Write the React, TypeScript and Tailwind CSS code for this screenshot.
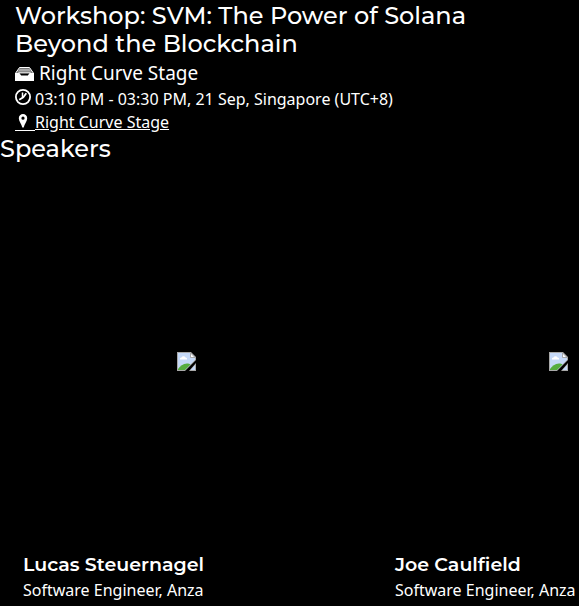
import React from "react";

const speakers = [
  { name: "Lucas Steuernagel", role: "Software Engineer, Anza" },
  { name: "Joe Caulfield", role: "Software Engineer, Anza" },
];

function InboxIcon() {
  return (
    <svg viewBox="0 0 19 14" className="mt-0.5 h-[14px] w-[19px] shrink-0" aria-hidden="true">
      <path d="M4.500 0.500h10L18.500 6H.5z" fill="#777" />
      <path d="M4.500 0.500h10" stroke="#fff" strokeWidth="1" />
      <path d="M4.500 0.500L.8 5.800M14.500.5l3.700 5.300" stroke="#fff" strokeWidth="1" />
      <path d="M4.500 2h10l1.500 2.500H3z" fill="#a8a8a8" />
      <path d="M3 5h13L13.500 8.500h-8z" fill="#d0d0d0" />
      <path d="M4.500 6.500h10L13 9H6z" fill="#000" />
      <path d="M0 6h4.200l2 2.500h6.600l2-2.500H19v8H0z" fill="#fff" />
    </svg>
  );
}

function ClockIcon() {
  return (
    <svg viewBox="0 0 16 16" className="-mt-1 size-4 shrink-0" aria-hidden="true" fill="none" stroke="#fff">
      <circle cx="8" cy="8" r="7.100" strokeWidth="1.800" />
      <path d="M11.300 4.200L8.300 8.300 4.200 10.800" strokeWidth="1.800" />
      <path d="M7.500 3.500v5" strokeWidth="1.500" />
    </svg>
  );
}

function PinIcon() {
  return (
    <svg viewBox="0 0 16 16" className="size-4 shrink-0" aria-hidden="true">
      <path
        d="M8 1a4.200 4.200 0 0 0-4.200 4.200C3.800 8.200 6.600 10.800 7.300 14.500h1.400C9.400 10.800 12.200 8.200 12.200 5.200A4.200 4.200 0 0 0 8 1zm0 2.600a1.600 1.600 0 1 1 0 3.200 1.600 1.600 0 0 1 0-3.200z"
        fill="#fff"
        fillRule="evenodd"
      />
    </svg>
  );
}

function MissingPhoto({ name }: { name: string }) {
  return (
    <svg viewBox="0 0 19 19" className="size-[19px]" role="img" aria-label={name}>
      <path d="M0 0h14l5 5v3L8 19H0z" fill="#a8a8a8" />
      <path d="M1 1h12.500L18 5.500V8L8 18H1z" fill="#c5d9f8" />
      <path d="M3 7.500a1.500 1.500 0 0 1 1.500-2 2.200 2.200 0 0 1 4 0 1.500 1.500 0 0 1 1.500 2z" fill="#fff" />
      <path d="M1 17c2-3 5-5.500 9-5.500 1.500 0 2.500.3 3.500 1L8 18H1z" fill="#56ad3f" />
      <path d="M13.500 1v4.500H18z" fill="#fff" stroke="#999" strokeWidth=".8" />
      <path d="M19 11v8h-7z" fill="#a8a8a8" />
      <path d="M18 13v5h-4.500z" fill="#c5d9f8" />
    </svg>
  );
}

export default function App() {
  return (
    <main className="min-h-screen overflow-hidden bg-black pt-0.5 font-['Noto_Sans',sans-serif] text-base text-white">
      <header className="px-[15px]">
        <h1 className="font-[Montserrat,Inter,sans-serif] text-2xl leading-7 font-medium">
          Workshop: SVM: The Power of Solana Beyond the Blockchain
        </h1>
        <p className="mt-px flex items-center gap-[5px] text-[19px] leading-7">
          <InboxIcon />
          Right Curve Stage
        </p>
        <p className="flex items-center gap-1 leading-6">
          <ClockIcon />
          03:10 PM - 03:30 PM, 21 Sep, Singapore (UTC+8)
        </p>
        <a href="#stage" className="flex w-fit leading-[22px] underline">
          <span className="flex h-5 items-center border-b border-white pr-1">
            <PinIcon />
          </span>
          Right Curve Stage
        </a>
      </header>
      <section>
        <h2 className="mt-0.5 font-[Montserrat,Inter,sans-serif] text-2xl leading-7 font-medium">Speakers</h2>
        <ul className="flex overflow-hidden">
          {speakers.map((speaker) => (
            <li key={speaker.name} className="w-93 shrink-0 pt-3">
              <div className="flex aspect-square items-center justify-center">
                <MissingPhoto name={speaker.name} />
              </div>
              <div className="px-[23px] pt-1">
                <h3 className="font-[Montserrat,Inter,sans-serif] text-[19px] leading-7 font-semibold">{speaker.name}</h3>
                <p className="leading-[22px]">{speaker.role}</p>
              </div>
            </li>
          ))}
        </ul>
      </section>
    </main>
  );
}
